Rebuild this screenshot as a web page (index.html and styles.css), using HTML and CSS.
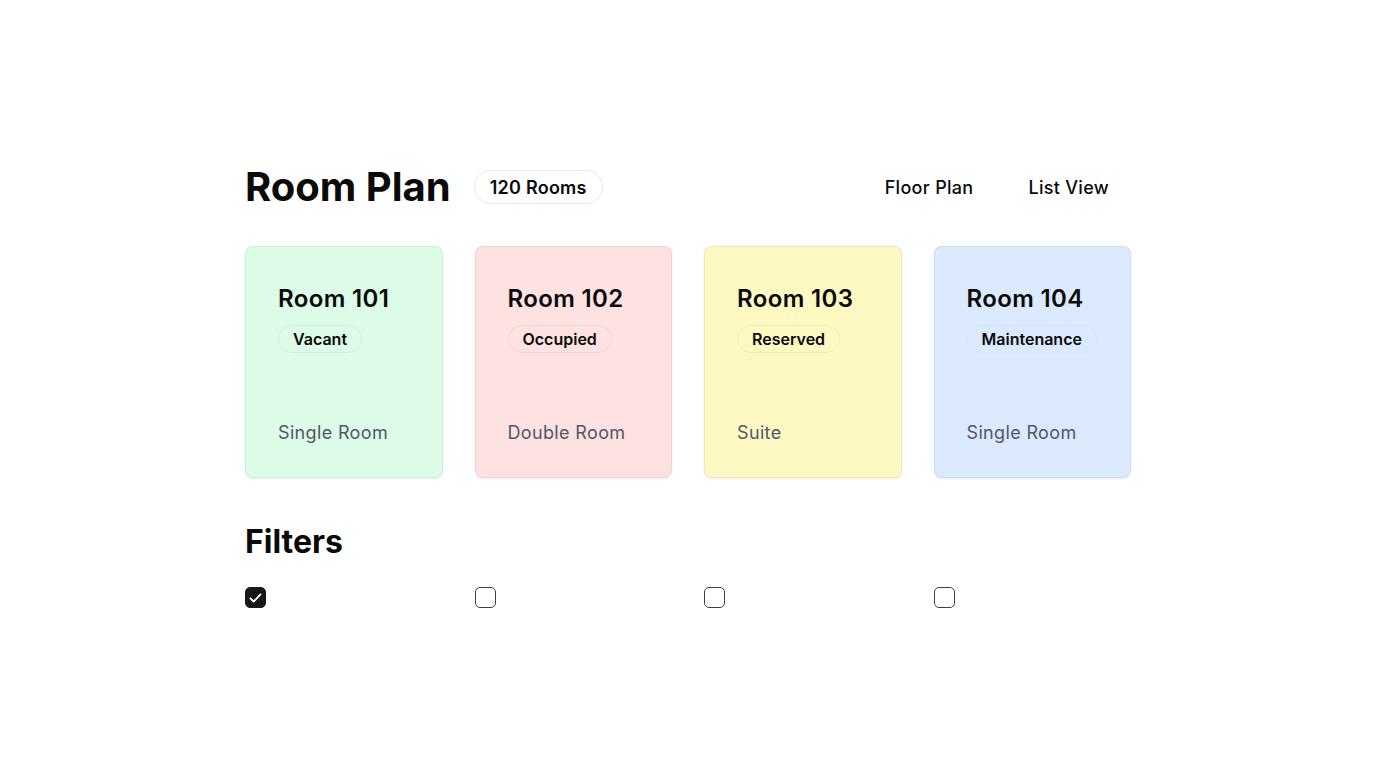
FILE: index.html
```html
<!DOCTYPE html>
<html lang="en">
<head>
<meta charset="utf-8">
<title>Room Plan</title>
<link rel="stylesheet" href="styles.css">
</head>
<body>
<main class="page">
  <header class="header">
    <div class="title-group">
      <h1 class="title">Room Plan</h1>
      <span class="count">120 Rooms</span>
    </div>
    <nav class="nav">
      <button class="nav-btn">Floor Plan</button>
      <button class="nav-btn">List View</button>
    </nav>
  </header>

  <section class="grid">
    <article class="card card-green">
      <div class="card-top">
        <h2 class="room">Room 101</h2>
        <span class="status">Vacant</span>
      </div>
      <p class="type">Single Room</p>
    </article>
    <article class="card card-red">
      <div class="card-top">
        <h2 class="room">Room 102</h2>
        <span class="status">Occupied</span>
      </div>
      <p class="type">Double Room</p>
    </article>
    <article class="card card-yellow">
      <div class="card-top">
        <h2 class="room">Room 103</h2>
        <span class="status">Reserved</span>
      </div>
      <p class="type">Suite</p>
    </article>
    <article class="card card-blue">
      <div class="card-top">
        <h2 class="room">Room 104</h2>
        <span class="status status-faint">Maintenance</span>
      </div>
      <p class="type">Single Room</p>
    </article>
  </section>

  <section class="filters">
    <h2 class="filters-title">Filters</h2>
    <div class="filter-grid">
      <label class="check"><span class="box checked"><svg viewBox="0 0 20 20" width="20" height="20"><path d="M4.6 10.3l3.5 3.4 7.2-7.4" fill="none" stroke="#fff" stroke-width="1.9" stroke-linecap="round" stroke-linejoin="round"/></svg></span></label>
      <label class="check"><span class="box"></span></label>
      <label class="check"><span class="box"></span></label>
      <label class="check"><span class="box"></span></label>
    </div>
  </section>
</main>
</body>
</html>
```

FILE: styles.css
```css
* { box-sizing: border-box; }
html, body { margin: 0; padding: 0; background: #fff; }
body {
  font-family: Inter, "Noto Sans", "Liberation Sans", sans-serif;
  color: #0a0a0a;
}
.page {
  width: 886px;
  margin: 0 auto;
  padding-top: 164px;
}
.header {
  display: flex;
  align-items: center;
  justify-content: space-between;
  height: 46px;
}
.title-group {
  display: flex;
  align-items: center;
  gap: 23px;
}
.title {
  margin: 0;
  font-size: 40px;
  font-weight: 700;
  line-height: 46px;
}
.count {
  display: inline-flex;
  align-items: center;
  height: 34px;
  padding: 0 15px;
  border: 1px solid #e5e7eb;
  border-radius: 999px;
  font-size: 18px;
  font-weight: 600;
  letter-spacing: 0.25px;
}
.nav {
  display: flex;
  gap: 11px;
}
.nav-btn {
  font-family: inherit;
  background: none;
  border: 0;
  padding: 8px 22px;
  font-size: 18px;
  font-weight: 500;
  letter-spacing: 0.3px;
  color: #0a0a0a;
}
.grid {
  display: grid;
  grid-template-columns: repeat(4, 1fr);
  gap: 32px;
  margin-top: 36px;
}
.card {
  height: 232px;
  border-radius: 8px;
  border: 1px solid rgba(0,0,0,0.06);
  box-shadow: 0 1px 3px rgba(0,0,0,0.07);
  padding: 36px 32px 31px;
  display: flex;
  flex-direction: column;
  justify-content: space-between;
}
.card-green { background: #dcfce7; }
.card-red { background: #fee2e2; }
.card-yellow { background: #fef9c3; }
.card-blue { background: #dbeafe; }
.card-top {
  display: flex;
  flex-direction: column;
  align-items: flex-start;
  gap: 10px;
}
.room {
  margin: 0;
  font-size: 24px;
  font-weight: 600;
  line-height: 32px;
  letter-spacing: 0.35px;
}
.status {
  display: inline-flex;
  align-items: center;
  height: 28px;
  padding: 0 14px;
  border-radius: 999px;
  border: 1px solid rgba(0,0,0,0.05);
  font-size: 16px;
  font-weight: 600;
}
.status-faint { border-color: rgba(0,0,0,0.02); }
.type {
  margin: 0;
  font-size: 18px;
  line-height: 26px;
  letter-spacing: 0.35px;
  color: #525866;
}
.filters { margin-top: 44px; }
.filters-title {
  margin: 0;
  font-size: 32px;
  font-weight: 700;
  line-height: 40px;
}
.filter-grid {
  display: grid;
  grid-template-columns: repeat(4, 1fr);
  gap: 32px;
  margin-top: 25px;
}
.check { display: flex; }
.box {
  width: 21px;
  height: 21px;
  border-radius: 5px;
  border: 1.5px solid #3f3f46;
  background: #fff;
  display: flex;
  align-items: center;
  justify-content: center;
}
.box.checked {
  background: #18181b;
  border-color: #18181b;
}
.box svg { display: block; }
```
